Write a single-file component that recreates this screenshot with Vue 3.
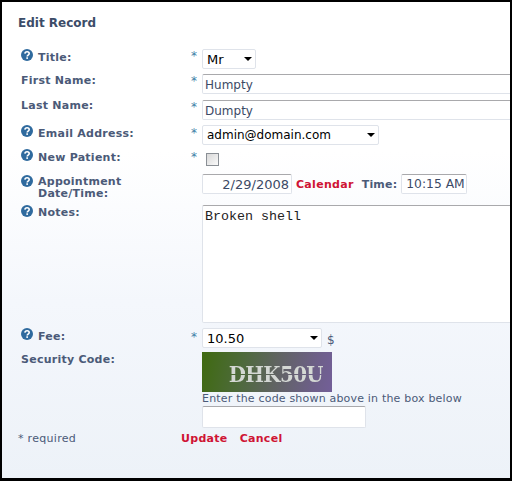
<script setup>
const rows = [
  { label: 'Title:', help: true, star: true, kind: 'title', h: 'r-title' },
  { label: 'First Name:', help: false, star: true, kind: 'text', value: 'Humpty', h: 'r-first' },
  { label: 'Last Name:', help: false, star: true, kind: 'text', value: 'Dumpty', h: 'r-last' },
  { label: 'Email Address:', help: true, star: true, kind: 'email', h: 'r-email' },
  { label: 'New Patient:', help: true, star: true, kind: 'check', h: 'r-check' },
  { label: 'Appointment Date/Time:', help: true, star: false, kind: 'date', h: 'r-date' },
  { label: 'Notes:', help: true, star: false, kind: 'notes', h: 'r-notes' },
  { label: 'Fee:', help: true, star: true, kind: 'fee', h: 'r-fee' },
  { label: 'Security Code:', help: false, star: false, kind: 'captcha', h: 'r-captcha' },
]
</script>

<template>
  <div class="frame">
    <h1 class="heading">Edit Record</h1>
    <div class="form">
      <div v-for="r in rows" :key="r.label" class="row" :class="r.h">
        <div class="label" :class="{ plain: !r.help }">
          <svg v-if="r.help" class="help" viewBox="0 0 12 12" width="12" height="12" aria-hidden="true">
            <circle cx="6" cy="6" r="6" fill="#2f6a9e" />
            <path d="M3.9 4.6C4 3.4 4.9 2.7 6.1 2.7c1.3 0 2.1.8 2.1 1.8 0 1.7-2 1.6-2 3" fill="none" stroke="#fff" stroke-width="1.6" />
            <rect x="5.3" y="8.3" width="1.7" height="1.6" fill="#fff" />
          </svg>
          <span class="label-text">{{ r.label }}</span>
        </div>
        <div class="star"><template v-if="r.star">*</template></div>
        <div class="field">
          <div v-if="r.kind === 'title'" class="select-wrap w-title">
            <select class="select"><option>Mr</option></select><span class="caret"></span>
          </div>
          <input v-else-if="r.kind === 'text'" class="input wide" type="text" :value="r.value" />
          <div v-else-if="r.kind === 'email'" class="select-wrap w-email">
            <select class="select small"><option>admin@domain.com</option></select><span class="caret"></span>
          </div>
          <span v-else-if="r.kind === 'check'" class="check"></span>
          <div v-else-if="r.kind === 'date'" class="date-row">
            <input class="input date" type="text" value="2/29/2008" />
            <a class="link calendar">Calendar</a>
            <span class="time-label">Time:</span>
            <input class="input time" type="text" value="10:15 AM" />
          </div>
          <textarea v-else-if="r.kind === 'notes'" class="notes" spellcheck="false">Broken shell</textarea>
          <div v-else-if="r.kind === 'fee'" class="fee-row">
            <div class="select-wrap w-fee">
              <select class="select"><option>10.50</option></select><span class="caret"></span>
            </div>
            <span class="dollar">$</span>
          </div>
          <div v-else class="captcha-box">
            <div class="captcha"><span class="captcha-text">DHK50U</span></div>
            <div class="hint">Enter the code shown above in the box below</div>
            <input class="input code" type="text" />
          </div>
        </div>
      </div>
    </div>
    <div class="footer">
      <span class="required">* required</span>
      <a class="link update">Update</a>
      <a class="link">Cancel</a>
    </div>
  </div>
</template>

<style>
html, body { margin: 0; padding: 0; background: #000; }
</style>

<style scoped>
.frame {
  box-sizing: border-box;
  width: 512px;
  height: 481px;
  border: 2px solid #000;
  border-bottom-width: 3px;
  overflow: hidden;
  background: linear-gradient(to bottom, #fff 0, #fff 150px, #f4f7fc 300px, #edf2f8 100%);
  font-family: "DejaVu Sans", Verdana, sans-serif;
  color: #4b5a78;
  font-size: 11px;
}
.heading {
  margin: 13px 0 0 16px;
  height: 16px;
  font-size: 12px;
  line-height: 16px;
  font-weight: bold;
  color: #3c4c68;
}
.form { margin-top: 16px; padding-left: 19px; }
.row { display: grid; grid-template-columns: 170px 11px 1fr; align-items: start; }
.r-title { height: 26px; }
.r-first { height: 26px; }
.r-last { height: 25px; }
.r-email { height: 25px; }
.r-check { height: 25px; }
.r-date { height: 31px; }
.r-notes { height: 123px; }
.r-fee { height: 24px; }
.r-captcha { height: 80px; }
.label { display: flex; align-items: flex-start; gap: 5px; font-weight: bold; line-height: 12px; padding-right: 30px; letter-spacing: 0.25px; }
.r-title .label { padding-top: 2px; }
.r-first .label { padding-top: 1px; }
.r-email .label { padding-top: 1px; }
.r-date .label { padding-top: 1px; }
.r-captcha .label { padding-top: 1px; }
.help { flex: none; }
.label-text { display: block; padding-top: 3px; }
.plain .label-text, .r-date .label-text { padding-top: 1px; }
.r-notes .label-text { padding-top: 2px; }
.star { color: #3f7fa8; font-size: 12px; line-height: 12px; padding-top: 3px; }
.r-first .star, .r-last .star, .r-check .star { padding-top: 2px; }
.field { min-width: 0; }
.input, .select, .notes {
  box-sizing: border-box;
  border: 1px solid #dfe3ea;
  border-top: 1px solid #a9a9ac;
  border-radius: 2px;
  background: #fff;
  font-family: "DejaVu Sans", Verdana, sans-serif;
  font-size: 13px;
  color: #3c4a66;
  outline: none;
  margin: 0;
}
.input { display: block; height: 20px; padding: 0 2px; }
.wide { width: 330px; margin-top: 1px; font-size: 12px; padding-top: 2px; }
.select-wrap { position: relative; height: 20px; }
.select { appearance: none; width: 100%; height: 20px; padding: 0 4px; color: #000; display: block; border-color: #dfe3ea; }
.select.small { font-size: 12px; }
.caret { position: absolute; right: 4px; top: 8px; border: 4px solid transparent; border-top: 4px solid #000; border-bottom: 0; }
.w-title { width: 54px; margin-top: 2px; }
.w-email { width: 177px; margin-top: 1px; }
.w-fee { width: 120px; }
.check {
  display: block;
  box-sizing: border-box;
  width: 13px;
  height: 13px;
  margin: 4px 0 0 4px;
  border: 1px solid #8a8f95;
  background: linear-gradient(135deg, #d8d8d8, #fafafa);
}
.date-row { display: flex; align-items: center; height: 20px; }
.date { width: 90px; text-align: right; }
.link { color: #cf1434; font-weight: bold; letter-spacing: 0.3px; }
.calendar { margin-left: 4px; }
.time-label { margin-left: 8px; font-weight: bold; letter-spacing: 0.2px; }
.time { width: 66px; margin-left: 4px; font-size: 12.3px; padding-left: 4px; }
.notes {
  display: block;
  width: 330px;
  height: 118px;
  padding: 3px 2px;
  resize: none;
  font-family: "Liberation Mono", monospace;
  font-size: 13.33px;
  color: #222;
}
.fee-row { display: flex; align-items: center; gap: 5px; }
.dollar { font-size: 12px; padding-top: 3px; }
.captcha-box { display: flex; flex-direction: column; }
.captcha {
  width: 130px;
  height: 40px;
  background: linear-gradient(100deg, #3f6a10 0, #4d6a3a 30%, #5f6460 55%, #6d5f88 85%, #735f98 100%);
  display: flex;
  align-items: flex-end;
  justify-content: flex-end;
  padding: 0 9px 6px 0;
  box-sizing: border-box;
}
.captcha-text {
  font-family: "DejaVu Serif", serif;
  font-weight: bold;
  font-stretch: condensed;
  font-size: 22px;
  line-height: 24px;
  letter-spacing: -0.6px;
  background: linear-gradient(to bottom, #d4d8d4 0, #d4d8d4 50%, transparent 50%, transparent 56%, #d4d8d4 56%);
  -webkit-background-clip: text;
  background-clip: text;
  color: transparent;
}
.hint { height: 14px; line-height: 14px; font-size: 11px; white-space: nowrap; letter-spacing: 0.19px; }
.code { width: 164px; height: 22px; }
.footer { display: flex; align-items: center; height: 14px; line-height: 14px; padding-left: 16px; }
.required { width: 163px; font-size: 11px; letter-spacing: 0.3px; }
.update { margin-right: 12px; }
</style>
